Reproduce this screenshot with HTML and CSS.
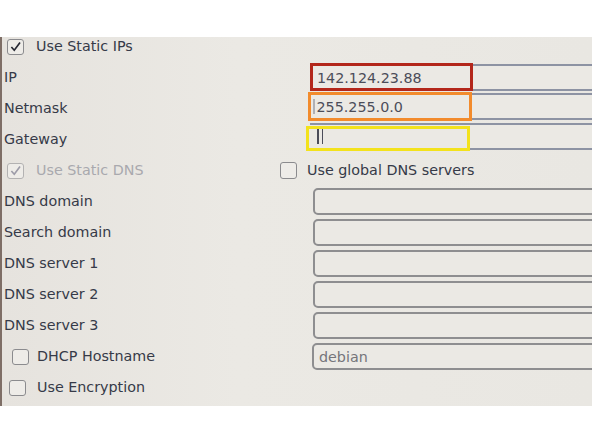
FILE: index.html
```html
<!DOCTYPE html>
<html>
<head>
<meta charset="utf-8">
<link rel="stylesheet" href="styles.css">
</head>
<body>
<div class="top"></div>
<div class="screen">
  <div class="row first">
    <div class="cell">
      <span class="cb cb-a checked"><svg viewBox="0 0 17 17"><polyline points="3.5,8.5 7,12.5 14,3"/></svg></span>
      <span class="txt">Use Static IPs</span>
    </div>
  </div>
  <div class="row">
    <div class="cell"><span class="txt">IP</span></div>
    <div class="field f-ip">
      <div class="input wide">142.124.23.88</div>
      <div class="hl hl-red"></div>
    </div>
  </div>
  <div class="row">
    <div class="cell"><span class="txt">Netmask</span></div>
    <div class="field f-mask">
      <div class="input wide"><span class="caret faint"></span>255.255.0.0</div>
      <div class="hl hl-orange"></div>
    </div>
  </div>
  <div class="row">
    <div class="cell"><span class="txt">Gateway</span></div>
    <div class="field f-gw">
      <div class="input wide"><span class="caret"></span><span class="caret"></span></div>
      <div class="hl hl-yellow"></div>
    </div>
  </div>
  <div class="row">
    <div class="cell narrow">
      <span class="cb cb-a disabled"><svg viewBox="0 0 17 17"><polyline points="3.5,8.5 7,12.5 14,3"/></svg></span>
      <span class="txt dim">Use Static DNS</span>
    </div>
    <span class="cb cb-g"></span>
    <span class="txt">Use global DNS servers</span>
  </div>
  <div class="row">
    <div class="cell"><span class="txt">DNS domain</span></div>
    <div class="input box"></div>
  </div>
  <div class="row">
    <div class="cell"><span class="txt">Search domain</span></div>
    <div class="input box"></div>
  </div>
  <div class="row">
    <div class="cell"><span class="txt">DNS server 1</span></div>
    <div class="input box"></div>
  </div>
  <div class="row">
    <div class="cell"><span class="txt">DNS server 2</span></div>
    <div class="input box"></div>
  </div>
  <div class="row">
    <div class="cell"><span class="txt">DNS server 3</span></div>
    <div class="input box"></div>
  </div>
  <div class="row">
    <div class="cell">
      <span class="cb cb-h"></span>
      <span class="txt">DHCP Hostname</span>
    </div>
    <div class="input box host">debian</div>
  </div>
  <div class="row">
    <div class="cell">
      <span class="cb cb-e"></span>
      <span class="txt">Use Encryption</span>
    </div>
  </div>
</div>
</body>
</html>
```
FILE: styles.css
```css
html, body {
  margin: 0;
  padding: 0;
  background: #ffffff;
}
body {
  width: 592px;
  height: 444px;
  overflow: hidden;
  font-family: "DejaVu Sans", "Liberation Sans", sans-serif;
  font-size: 14.3px;
  color: #363a48;
}
.top {
  height: 37px;
  background: #ffffff;
}
.screen {
  height: 369px;
  overflow: hidden;
  background: linear-gradient(90deg, #e6e3de 0%, #ebe9e4 40%, #e9e7e2 100%);
  border-left: 2px solid #7e6e66;
  padding-left: 2px;
}
.row {
  display: flex;
  align-items: center;
  height: 31px;
  white-space: nowrap;
}
.row.first {
  height: 19px;
  padding-bottom: 6px;
}
.cell {
  width: 306px;
  flex: none;
  display: flex;
  align-items: center;
}
.cell.narrow {
  width: 274px;
}
.txt {
  line-height: 17px;
}
.txt.dim {
  color: #a9a9ae;
}
.cb {
  width: 17px;
  height: 16px;
  box-sizing: border-box;
  border: 1.5px solid #8b8b8e;
  border-radius: 3px;
  background: #eeece8;
  flex: none;
  display: inline-flex;
}
.cb svg {
  width: 100%;
  height: 100%;
}
.cb polyline {
  fill: none;
  stroke: #262833;
  stroke-width: 2;
}
.cb.disabled {
  border-color: #b3b2b2;
}
.cb.disabled polyline {
  stroke: #9d9ca8;
}
.cb-a { margin-left: 3px; margin-right: 12px; }
.cb-g { margin-left: 2px; margin-right: 10px; height: 17px; }
.cb-h { margin-left: 8px; margin-right: 8px; }
.cb-e { margin-left: 5px; margin-right: 11px; }

.field {
  position: relative;
  flex: none;
}
.f-mask { margin-top: -4px; }
.f-gw { margin-top: -6px; }
.input {
  box-sizing: border-box;
  height: 27px;
  flex: none;
  display: flex;
  align-items: center;
  color: #4b4d59;
  background: #ebe9e4;
}
.input.wide {
  width: 320px;
  border-top: 2px solid #8d93a3;
  border-bottom: 2px solid #8d93a3;
  padding-left: 7px;
}
.input.box {
  width: 320px;
  margin-left: 3px;
  border: 2px solid #8e8e90;
  border-radius: 5px;
  height: 27px;
}
.input.host {
  margin-left: 2px;
  padding-left: 5px;
  color: #75757a;
}
.caret {
  width: 1.5px;
  height: 15px;
  background: #4b4d59;
  margin-right: 3px;
}
.caret.faint {
  background: #b0b0b4;
  margin-left: -4px;
  margin-right: 2px;
}
.hl {
  position: absolute;
  box-sizing: border-box;
  border-style: solid;
  border-width: 3px;
}
.hl-red {
  left: 0;
  top: -1px;
  width: 163px;
  height: 28px;
  border-color: #b3271b;
}
.hl-orange {
  left: -2px;
  top: -1px;
  width: 164px;
  height: 29px;
  border-color: #f28b2c;
}
.hl-yellow {
  left: -4px;
  top: 3px;
  width: 164px;
  height: 25px;
  border-color: #f3e21c;
}
```
